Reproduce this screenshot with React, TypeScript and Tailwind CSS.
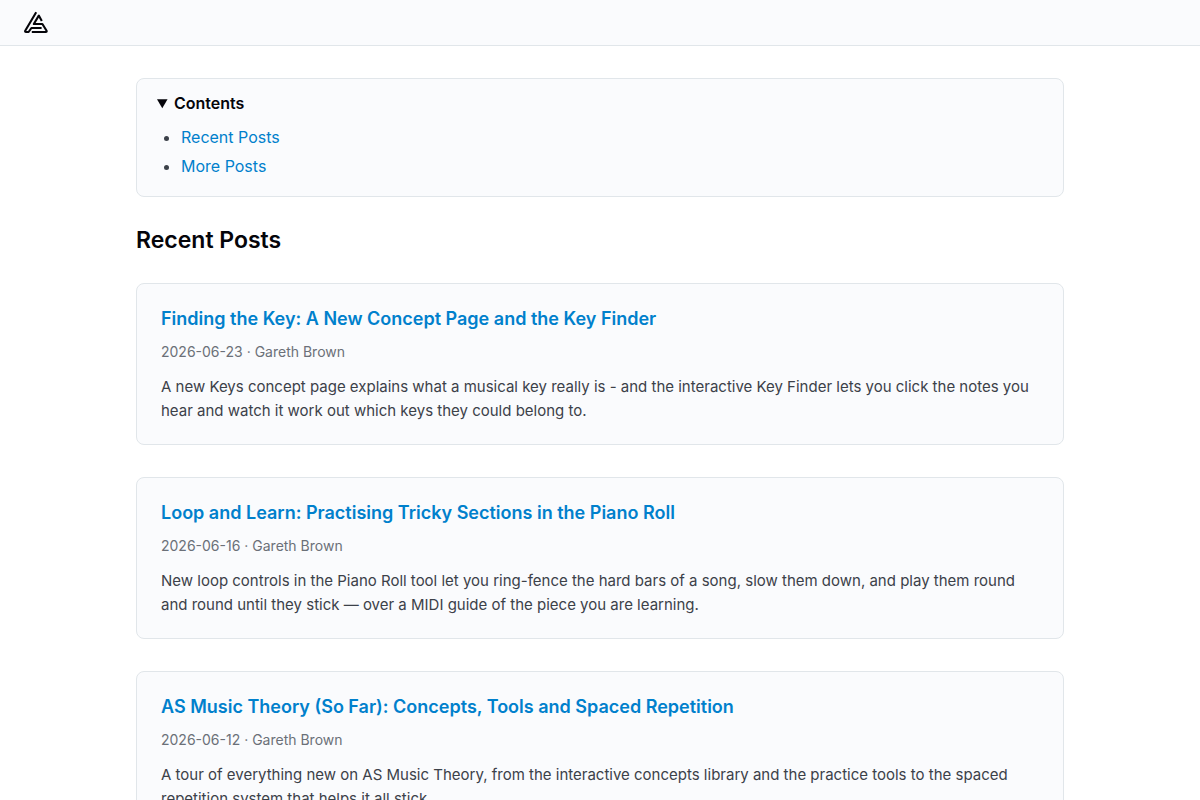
import React from 'react';

const contents = [
  { id: 'recent-posts', label: 'Recent Posts' },
  { id: 'more-posts', label: 'More Posts' },
];

const posts = [
  {
    title: 'Finding the Key: A New Concept Page and the Key Finder',
    date: '2026-06-23',
    author: 'Gareth Brown',
    summary:
      'A new Keys concept page explains what a musical key really is - and the interactive Key Finder lets you click the notes you hear and watch it work out which keys they could belong to.',
  },
  {
    title: 'Loop and Learn: Practising Tricky Sections in the Piano Roll',
    date: '2026-06-16',
    author: 'Gareth Brown',
    summary:
      'New loop controls in the Piano Roll tool let you ring-fence the hard bars of a song, slow them down, and play them round and round until they stick — over a MIDI guide of the piece you are learning.',
  },
  {
    title: 'AS Music Theory (So Far): Concepts, Tools and Spaced Repetition',
    date: '2026-06-12',
    author: 'Gareth Brown',
    summary:
      'A tour of everything new on AS Music Theory, from the interactive concepts library and the practice tools to the spaced repetition system that helps it all stick.',
  },
];

function Logo() {
  return (
    <svg viewBox="0 0 24 24" className="size-6" fill="none" stroke="#05050a" strokeWidth="2.1" strokeLinejoin="round" aria-hidden="true">
      <path d="M12.2 2.2 L1.2 20.8 Q0.8 22 2 22 H4.6 L7.4 18 H17.6" />
      <path d="M17.8 11 L14.8 5.6 L9.8 14 H18.4 L22.6 20.8 Q23 22 21.8 22 H7.8" />
    </svg>
  );
}

export default function App() {
  return (
    <div className="min-h-screen bg-white font-['Inter',sans-serif] text-[#3c4149]">
      <header className="border-b border-[#e1e6ea] bg-[#fafbfd] px-6 pt-[10px] pb-[11px]">
        <a href="#" aria-label="Home" className="block w-fit">
          <Logo />
        </a>
      </header>

      <main className="mx-auto max-w-[976px] px-6 pt-8 pb-12">
        <details open className="rounded-lg border border-[#e1e6ea] bg-[#fafbfd] px-5 pt-3 pb-[15px]">
          <summary className="cursor-pointer font-semibold text-[#05050a]">Contents</summary>
          <ul className="mt-2 list-disc pl-6">
            {contents.map((item) => (
              <li key={item.id} className="leading-[29px]">
                <a href={`#${item.id}`} className="text-[#0080cc] hover:underline">{item.label}</a>
              </li>
            ))}
          </ul>
        </details>

        <h2 id="recent-posts" className="mt-7 text-[23px] leading-[30px] font-semibold text-[#05050a]">Recent Posts</h2>

        <div className="mt-7 space-y-8">
          {posts.map((post) => (
            <article key={post.date} className="rounded-lg border border-[#e1e6ea] bg-[#fafbfd] px-6 pt-[22px] pb-[21px]">
              <h3 className="text-lg leading-[26px] font-semibold">
                <a href="#" className="text-[#0080cc] hover:underline">{post.title}</a>
              </h3>
              <p className="mt-2 text-sm leading-6 text-[#6b7078]">
                {post.date} · {post.author}
              </p>
              <p className="mt-[11px] text-[15px] leading-6">{post.summary}</p>
            </article>
          ))}
        </div>
      </main>
    </div>
  );
}
